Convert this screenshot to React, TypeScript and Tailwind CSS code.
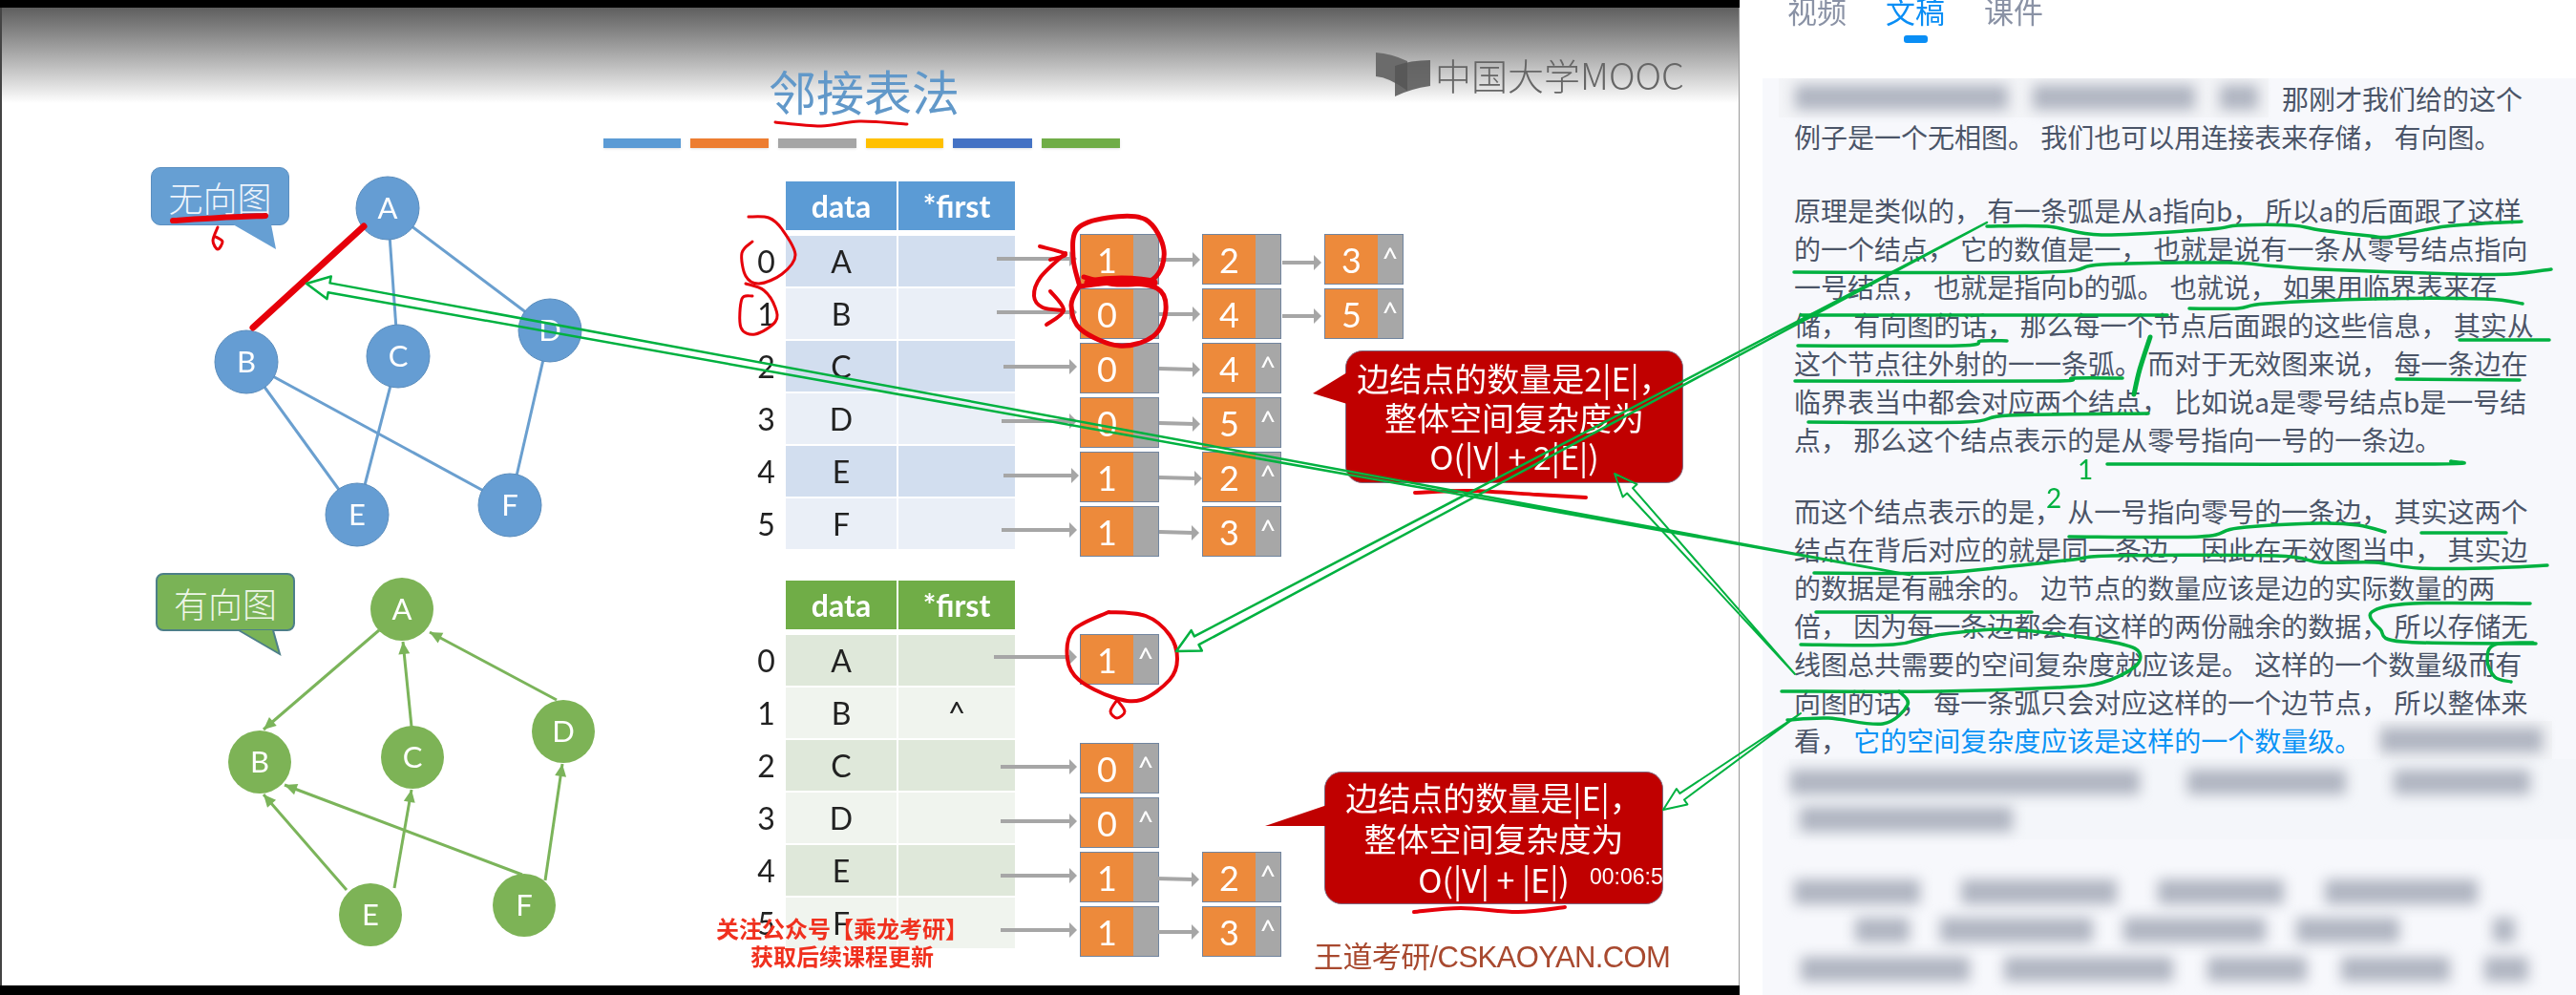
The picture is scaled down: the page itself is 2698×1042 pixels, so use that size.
import React from 'react';

type Pt = [number, number];

const CJK = { fontFamily: '"Noto Sans CJK SC", "Noto Sans", sans-serif' };
const SLIDE_FONT = { fontFamily: 'Lato, "Noto Sans CJK SC", sans-serif' };

// catmull-rom through the points, so the ink strokes look hand drawn
const smooth = (p: Pt[]) => {
  let d = `M${p[0][0]} ${p[0][1]}`;
  for (let i = 0; i < p.length - 1; i++) {
    const a = p[Math.max(i - 1, 0)];
    const b = p[i];
    const c = p[i + 1];
    const e = p[Math.min(i + 2, p.length - 1)];
    d += ` C${b[0] + (c[0] - a[0]) / 6} ${b[1] + (c[1] - a[1]) / 6} ${c[0] - (e[0] - b[0]) / 6} ${c[1] - (e[1] - b[1]) / 6} ${c[0]} ${c[1]}`;
  }
  return d;
};

// hollow arrow whose shaft narrows down to a point at the tail
const hollowArrow = (tip: Pt, tail: Pt, head = 22, wing = 11, neck = 4) => {
  const dx = tail[0] - tip[0];
  const dy = tail[1] - tip[1];
  const len = Math.hypot(dx, dy);
  const ux = dx / len;
  const uy = dy / len;
  const bx = tip[0] + ux * head;
  const by = tip[1] + uy * head;
  const side = (w: number): string => `${bx - uy * w} ${by + ux * w}`;
  return `M${tip[0]} ${tip[1]} L${side(wing)} L${side(neck)} L${tail[0]} ${tail[1]} L${side(-neck)} L${side(-wing)} Z`;
};

const blueEdges: [Pt, Pt][] = [
  [[406, 218], [417, 373]],
  [[406, 218], [576, 346]],
  [[417, 373], [374, 539]],
  [[258, 379], [374, 539]],
  [[258, 379], [534, 529]],
  [[576, 346], [534, 529]],
];

const blueNodes: [string, number, number][] = [
  ['A', 406, 218],
  ['B', 258, 379],
  ['C', 417, 373],
  ['D', 576, 346],
  ['E', 374, 539],
  ['F', 534, 529],
];

const greenNodes: [string, number, number][] = [
  ['A', 421, 638],
  ['B', 272, 798],
  ['C', 432, 793],
  ['D', 590, 766],
  ['E', 388, 958],
  ['F', 549, 948],
];

// line ends stop at the circle edge, arrow head on the second point
const greenEdges: [Pt, Pt][] = [
  [[397, 660], [276, 764]],
  [[431, 761], [422, 672]],
  [[583, 733], [450, 662]],
  [[413, 930], [431, 827]],
  [[363, 932], [276, 832]],
  [[547, 916], [298, 822]],
  [[571, 922], [589, 800]],
];

const grayArrows: [number, number, number, number][] = [
  [1044, 271, 1128, 271], [1044, 327, 1128, 327], [1051, 384, 1128, 384],
  [1049, 441, 1128, 441], [1051, 498, 1130, 498], [1049, 555, 1128, 555],
  [1214, 272, 1257, 272], [1343, 275, 1384, 275], [1214, 329, 1257, 329], [1343, 331, 1384, 331],
  [1214, 386, 1257, 387], [1214, 443, 1257, 444], [1214, 500, 1259, 501], [1214, 557, 1256, 558],
  [1041, 688, 1128, 688], [1048, 803, 1128, 803], [1048, 860, 1128, 860],
  [1048, 917, 1128, 917], [1048, 974, 1128, 974], [1211, 920, 1256, 921], [1211, 976, 1256, 976],
];

const tableRows = ['A', 'B', 'C', 'D', 'E', 'F'];

const chainsTop: [string, boolean][][] = [
  [['1', false], ['2', false], ['3', true]],
  [['0', false], ['4', false], ['5', true]],
  [['0', false], ['4', true]],
  [['0', false], ['5', true]],
  [['1', false], ['2', true]],
  [['1', false], ['3', true]],
];

const chainsBottom: [string, boolean][][] = [
  [['1', true]],
  [],
  [['0', true]],
  [['0', true]],
  [['1', false], ['2', true]],
  [['1', false], ['3', true]],
];

const ListNode = ({ value, tail }: { value: string; tail: boolean }) => (
  <div className="flex w-[83px] h-[53px] border border-[#71859f] text-white">
    <div className="w-[55px] bg-[#ed8a3b] flex items-center justify-center text-[36px]">{value}</div>
    <div className="flex-1 bg-[#a7a7a7] flex justify-center text-[30px] leading-[36px] pt-[6px]">{tail ? '^' : ''}</div>
  </div>
);

const Chains = ({ rows, className }: { rows: [string, boolean][][]; className: string }) => (
  <div className={className}>
    {rows.map((row, i) => (
      <div key={i} className="flex gap-[45px] h-[53px]">
        {row.map(([v, t], j) => <ListNode key={j} value={v} tail={t} />)}
      </div>
    ))}
  </div>
);

const AdjTable = ({ className, head, dark, light, nullRow }: { className: string; head: string; dark: string; light: string; nullRow?: number }) => (
  <div className={className}>
    <div className="flex gap-[2px] h-[51px] pl-[39px] mb-[6px] text-white font-bold text-[32px]">
      <div className={`w-[116px] flex items-center justify-center ${head}`}>data</div>
      <div className={`w-[122px] flex items-center justify-center ${head}`}>*first</div>
    </div>
    <div className="flex flex-col gap-[2px]">
      {tableRows.map((r, i) => (
        <div key={r} className="flex gap-[2px] h-[53px] text-[32px] text-[#222]">
          <div className="w-[37px] flex items-center justify-center">{i}</div>
          <div className={`w-[116px] flex items-center justify-center ${i % 2 ? light : dark}`}>{r}</div>
          <div className={`w-[122px] flex items-center justify-center ${i % 2 ? light : dark}`}>{nullRow === i ? '^' : ''}</div>
        </div>
      ))}
    </div>
  </div>
);

const para1 = [
  '例子是一个无相图。 我们也可以用连接表来存储， 有向图。',
];
const para2 = [
  '原理是类似的， 有一条弧是从a指向b， 所以a的后面跟了这样',
  '的一个结点， 它的数值是一， 也就是说有一条从零号结点指向',
  '一号结点， 也就是指向b的弧。 也就说， 如果用临界表来存',
  '储， 有向图的话， 那么每一个节点后面跟的这些信息， 其实从',
  '这个节点往外射的一一条弧。 而对于无效图来说， 每一条边在',
  '临界表当中都会对应两个结点， 比如说a是零号结点b是一号结',
  '点， 那么这个结点表示的是从零号指向一号的一条边。',
];
const para3 = [
  '而这个结点表示的是， 从一号指向零号的一条边， 其实这两个',
  '结点在背后对应的就是同一条边， 因此在无效图当中， 其实边',
  '的数据是有融余的。 边节点的数量应该是边的实际数量的两',
  '倍， 因为每一条边都会有这样的两份融余的数据， 所以存储无',
  '线图总共需要的空间复杂度就应该是。 这样的一个数量级而有',
  '向图的话， 每一条弧只会对应这样的一个边节点， 所以整体来',
];

const Bar = ({ className }: { className: string }) => (
  <div className={`h-[26px] bg-[#b0b5c1] blur-[7px] ${className}`} />
);

const greenInk: Pt[][] = [
  [[2081, 237], [2144, 237], [2201, 246], [2315, 240], [2344, 236], [2401, 236], [2430, 241], [2482, 247], [2504, 248], [2562, 237], [2641, 232]],
  [[1879, 285], [2144, 285], [2201, 277], [2333, 275], [2373, 278], [2430, 282], [2573, 287], [2630, 287], [2672, 282]],
  [[2293, 323], [2344, 323], [2373, 318], [2487, 313], [2602, 313], [2642, 318]],
  [[1886, 330], [2212, 330], [2270, 330]],
  [[1883, 362], [2052, 362], [2075, 357], [2102, 357]],
  [[2576, 356], [2670, 356]],
  [[1880, 399], [2144, 399], [2172, 396], [2223, 396]],
  [[2510, 397], [2639, 398]],
  [[1894, 442], [2058, 442], [2104, 435], [2250, 433]],
  [[2207, 486], [2550, 486], [2567, 483]],
  [[2167, 562], [2304, 562], [2344, 553], [2430, 548], [2470, 550], [2498, 557]],
  [[2536, 558], [2625, 558]],
  [[1900, 600], [2029, 600], [2098, 594], [2172, 586], [2212, 582], [2384, 582], [2430, 589], [2487, 589], [2533, 595], [2602, 595], [2668, 592]],
  [[1902, 641], [2128, 641]],
  [[1886, 675], [1983, 675], [2029, 665], [2098, 659], [2172, 666], [2224, 675], [2241, 684], [2235, 699], [2201, 715], [2155, 720], [2029, 724], [1866, 724]],
  [[2650, 632], [2527, 632], [2484, 641], [2493, 659], [2516, 672], [2656, 674]],
  [[2630, 714], [2613, 709], [2605, 691], [2613, 675], [2653, 673]],
  [[1872, 754], [1915, 752], [1972, 758], [1998, 738], [1989, 724]],
];

const App: React.FC = () => {
  return (
    <div className="relative flex w-[2698px] h-[1042px] overflow-hidden bg-white" style={CJK}>
      {/* video column */}
      <div className="flex flex-col w-[1822px] h-full bg-white">
        <div className="h-[8px] bg-black" />
        <div className="relative flex-1 border-l-2 border-r border-l-[#444] border-r-[#999] blur-[0.6px]" style={SLIDE_FONT}>
          <div className="h-[100px] bg-gradient-to-b from-[#5f5f5f] to-white" />

          <h1 className="absolute left-[803px] top-[56px] text-[50px] leading-[60px] font-normal text-[#6198c9] whitespace-nowrap" style={CJK}>邻接表法</h1>

          {/* mooc logo */}
          <div className="absolute left-[1439px] top-[47px] flex items-center gap-[4px] text-[#666]">
            <svg width="58" height="46" viewBox="0 0 58 46">
              <path d="M0 0 Q16 1 33 9 L33 40 Q14 26 0 25 Z" fill="#6b6b6b" />
              <path d="M20 14 Q36 8 57 8 L57 35 Q36 38 20 46 Z" fill="#555" fillOpacity="0.85" />
            </svg>
            <span className="text-[38px] leading-[46px] font-light whitespace-nowrap" style={CJK}>中国大学MOOC</span>
          </div>

          {/* colour strip under the title */}
          <div className="absolute left-[630px] top-[137px] flex gap-[10px]">
            <div className="w-[81px] h-[10px] bg-[#5b9bd5] shadow-sm" />
            <div className="w-[82px] h-[10px] bg-[#ed7d31] shadow-sm" />
            <div className="w-[82px] h-[10px] bg-[#a5a5a5] shadow-sm" />
            <div className="w-[81px] h-[10px] bg-[#ffc000] shadow-sm" />
            <div className="w-[83px] h-[10px] bg-[#4472c4] shadow-sm" />
            <div className="w-[82px] h-[10px] bg-[#70ad47] shadow-sm" />
          </div>

          <AdjTable className="absolute left-[782px] top-[182px]" head="bg-[#5b9bd5]" dark="bg-[#d2deef]" light="bg-[#eaeff7]" />
          <AdjTable className="absolute left-[782px] top-[600px]" head="bg-[#70ad47]" dark="bg-[#dfe8da]" light="bg-[#f0f4ee]" nullRow={1} />

          <Chains rows={chainsTop} className="absolute left-[1129px] top-[237px] flex flex-col gap-[4px]" />
          <Chains rows={chainsBottom} className="absolute left-[1129px] top-[656px] flex flex-col gap-[4px]" />

          {/* speech bubbles */}
          <div className="absolute left-[156px] top-[167px] w-[145px] h-[61px] rounded-[10px] bg-[#669fd3] border border-[#5b8fc0] flex items-center justify-center text-[36px] font-light text-[#eef4fb]" style={CJK}>无向图</div>
          <div className="absolute left-[161px] top-[592px] w-[146px] h-[61px] rounded-[8px] bg-[#7ab356] border-2 border-[#4d7f88] flex items-center justify-center text-[36px] font-light text-[#eef6e8]" style={CJK}>有向图</div>
          <div className="absolute left-[1407px] top-[359px] w-[354px] h-[139px] rounded-[18px] bg-[#c00000] border border-[#7f6a80] flex flex-col items-center justify-center text-[34px] leading-[41px] text-white whitespace-nowrap" style={CJK}>
            <div>边结点的数量是2|E|，</div>
            <div>整体空间复杂度为</div>
            <div>O(|V| + 2|E|)</div>
          </div>
          <div className="absolute left-[1385px] top-[800px] w-[355px] h-[139px] rounded-[18px] bg-[#c00000] border border-[#7f6a80] flex flex-col items-center justify-center text-[34px] leading-[43px] text-white whitespace-nowrap" style={CJK}>
            <div>边结点的数量是|E|，</div>
            <div>整体空间复杂度为</div>
            <div>O(|V| + |E|)</div>
          </div>

          {/* watermarks */}
          <div className="absolute left-[756px] top-[949px] w-[248px] flex flex-col items-center text-[24px] leading-[29px] font-bold text-[#f0301e] whitespace-nowrap" style={CJK}>
            <div>关注公众号【乘龙考研】</div>
            <div>获取后续课程更新</div>
          </div>
          <div className="absolute left-[1374px] top-[974px] text-[31px] leading-[42px] text-[#a8492f] whitespace-nowrap tracking-[-0.6px]" style={{ fontFamily: '"Liberation Sans", "Noto Sans CJK SC", sans-serif' }}>王道考研/CSKAOYAN.COM</div>

          {/* graphs, list arrows and the red pen, same origin as the slide */}
          <svg className="absolute -left-[2px] -top-[8px] pointer-events-none" width="1822" height="1042" fill="none">
            {blueEdges.map(([a, b], i) => (
              <line key={i} x1={a[0]} y1={a[1]} x2={b[0]} y2={b[1]} stroke="#6a9fcf" strokeWidth="3" />
            ))}
            {blueNodes.map(([l, x, y]) => (
              <g key={l}>
                <circle cx={x} cy={y} r="33" fill="#659dd3" stroke="#5a8cbb" strokeWidth="1" />
                <text x={x} y={y + 11} textAnchor="middle" fontSize="31" fill="#fff" fontFamily="Lato">{l}</text>
              </g>
            ))}
            {greenEdges.map(([a, b], i) => {
              const an = Math.atan2(b[1] - a[1], b[0] - a[0]);
              const w = (s: number) => `${b[0] - 13 * Math.cos(an) + s * 6 * Math.sin(an)},${b[1] - 13 * Math.sin(an) - s * 6 * Math.cos(an)}`;
              return (
                <g key={i}>
                  <line x1={a[0]} y1={a[1]} x2={b[0]} y2={b[1]} stroke="#7bb45a" strokeWidth="3" />
                  <polygon points={`${b[0]},${b[1]} ${w(1)} ${w(-1)}`} fill="#7bb45a" />
                </g>
              );
            })}
            {greenNodes.map(([l, x, y]) => (
              <g key={l}>
                <circle cx={x} cy={y} r="33" fill="#7db356" />
                <text x={x} y={y + 11} textAnchor="middle" fontSize="31" fill="#fff" fontFamily="Lato">{l}</text>
              </g>
            ))}

            {/* bubble tails */}
            <path d="M244 235 L289 261 L284 235 Z" fill="#669fd3" />
            <path d="M250 660 L293 685 L286 660" fill="#7ab356" stroke="#4d7f88" strokeWidth="2" />
            <path d="M1411 390 L1375 412 L1411 423 Z" fill="#c00000" />
            <path d="M1390 843 L1325 865 L1390 865 Z" fill="#c00000" />

            {grayArrows.map(([x1, y1, x2, y2], i) => (
              <g key={i}>
                <line x1={x1} y1={y1} x2={x2 - 6} y2={y2} stroke="#a6a6a6" strokeWidth="4" />
                <path d={`M${x2 - 8} ${y2 - 8} L${x2} ${y2} L${x2 - 8} ${y2 + 8} Z`} fill="#a6a6a6" />
              </g>
            ))}

            <g stroke="#e6000a" strokeLinecap="round" strokeLinejoin="round" strokeWidth="3">
              <line x1="381" y1="237" x2="265" y2="343" strokeWidth="7" />
              <path d={smooth([[812, 128], [860, 132], [900, 127], [950, 130]])} />
              <path d={smooth([[181, 231], [230, 228], [278, 226]])} strokeWidth="6" />
              <path d={smooth([[228, 238], [223, 252], [228, 261], [233, 253], [226, 248]])} />
              <path d={smooth([[784, 227], [805, 228], [819, 240], [833, 267], [819, 287], [795, 297], [781, 289], [777, 265], [788, 253]])} />
              <path d={smooth([[781, 297], [800, 304], [812, 322], [812, 337], [791, 350], [776, 343], [777, 313], [788, 310]])} />
              <path d={smooth([[1130, 297], [1124, 270], [1128, 240], [1160, 228], [1200, 230], [1219, 262], [1208, 292], [1170, 298], [1135, 290]])} strokeWidth="5" />
              <path d={smooth([[1130, 300], [1170, 296], [1212, 302], [1221, 325], [1208, 352], [1172, 362], [1132, 345], [1122, 320], [1130, 300]])} strokeWidth="5" />
              <path d="M1140 296 Q1175 290 1208 296" strokeWidth="9" />
              <path d={smooth([[1116, 265], [1090, 290], [1083, 310], [1092, 322], [1114, 325]])} strokeWidth="4" />
              <path d={smooth([[1089, 258], [1116, 266], [1100, 272]])} strokeWidth="4" />
              <path d={smooth([[1100, 305], [1114, 325], [1096, 340]])} strokeWidth="4" />
              <path d={smooth([[1161, 641], [1200, 645], [1225, 665], [1233, 690], [1225, 712], [1195, 733], [1165, 730], [1130, 712], [1118, 690], [1124, 660], [1161, 641]])} strokeWidth="4" />
              <path d={smooth([[1170, 733], [1163, 745], [1170, 752], [1178, 745], [1170, 733]])} />
              <path d={smooth([[1482, 516], [1540, 514], [1610, 518], [1661, 521]])} strokeWidth="4" />
              <path d={smooth([[1481, 955], [1530, 951], [1590, 955], [1639, 950]])} strokeWidth="4" />
            </g>
          </svg>
        </div>
        <div className="h-[10px] bg-black" />
      </div>

      {/* transcript column */}
      <div className="flex flex-col flex-1 min-w-0 bg-white">
        <div className="relative h-[82px] pl-[50px] shrink-0">
          <div className="flex gap-[41px] -mt-[10px] text-[31px] leading-[42px] text-[#8a92a5]">
            <span>视频</span>
            <span className="text-[#0a8ef5]">文稿</span>
            <span>课件</span>
          </div>
          <div className="absolute left-[172px] top-[37px] w-[25px] h-[8px] rounded-[3px] bg-[#0a8ef5]" />
        </div>
        <div className="ml-[24px] flex-1 bg-[#f7f8fc] pl-[33px] pt-[1px] text-[28px] leading-[40px] text-[#4b5568] overflow-hidden whitespace-nowrap">
          <div className="flex h-[40px]">
            <div className="flex items-center gap-[26px] -ml-[16px] w-[513px] h-[42px] -mt-[2px] pl-[17px] bg-[#f3f4f7]">
              <Bar className="w-[223px]" />
              <Bar className="w-[170px]" />
              <Bar className="w-[40px]" />
            </div>
            <span className="ml-[14px]">那刚才我们给的这个</span>
          </div>
          {para1.map(l => <div key={l}>{l}</div>)}
          <div className="mt-[37px]">
            {para2.map(l => <div key={l}>{l}</div>)}
          </div>
          <div className="mt-[35px]">
            {para3.map(l => <div key={l}>{l}</div>)}
            <div className="flex h-[40px]">
              <span>看， <span className="text-[#0a93f5]">它的空间复杂度应该是这样的一个数量级。</span></span>
              <div className="ml-[20px] w-[180px] h-[40px] flex items-center bg-[#f3f4f7]">
                <Bar className="w-[170px]" />
              </div>
            </div>
          </div>
          <div className="-ml-[5px] pl-[1px] bg-[#f4f6fa] h-[84px] pt-[6px]">
            <div className="flex items-center gap-[50px] h-[36px]">
              <Bar className="w-[366px]" />
              <Bar className="w-[166px]" />
              <Bar className="w-[143px]" />
            </div>
            <div className="flex items-center h-[42px] pl-[10px]">
              <Bar className="w-[223px]" />
            </div>
          </div>
          <div className="mt-[35px] flex items-center gap-[43px] h-[40px]">
            <Bar className="w-[132px]" />
            <Bar className="w-[163px]" />
            <Bar className="w-[132px]" />
            <Bar className="w-[160px]" />
          </div>
          <div className="flex items-center gap-[32px] h-[40px] pl-[64px]">
            <Bar className="w-[57px]" />
            <Bar className="w-[160px]" />
            <Bar className="w-[149px]" />
            <Bar className="w-[108px]" />
            <Bar className="ml-[66px] w-[23px]" />
          </div>
          <div className="flex items-center gap-[36px] h-[42px] pl-[7px]">
            <Bar className="w-[177px]" />
            <Bar className="w-[177px]" />
            <Bar className="w-[104px]" />
            <Bar className="w-[114px]" />
            <Bar className="w-[46px]" />
          </div>
        </div>
      </div>

      {/* player timestamp, sits over the slide and is cut at the bubble edge */}
      <div className="absolute left-[1665px] top-[903px] w-[77px] overflow-hidden text-[23px] leading-[30px] text-white whitespace-nowrap" style={{ fontFamily: '"Liberation Sans", sans-serif' }}>00:06:59</div>

      {/* green pen drawn over both columns */}
      <svg className="absolute left-0 top-0 pointer-events-none" width="2698" height="1042" fill="none">
        <g stroke="#00b140" strokeLinejoin="round" strokeLinecap="round">
          <path d={hollowArrow([321, 297], [2000, 602], 24, 12, 5)} strokeWidth="2.5" />
          <path d={hollowArrow([1232, 682], [2081, 233], 24, 12, 5)} strokeWidth="2.5" />
          <path d={hollowArrow([1691, 496], [1880, 706], 24, 10, 4)} strokeWidth="2" />
          <path d={hollowArrow([1742, 848], [1886, 747], 24, 10, 4)} strokeWidth="2" />
          {greenInk.map((p, i) => <path key={i} d={smooth(p)} strokeWidth="3.5" />)}
          <path d={smooth([[2252, 353], [2241, 387], [2235, 413]])} strokeWidth="5" />
        </g>
        <text x="2176" y="502" fontSize="28" fill="#00b140" fontFamily="Lato">1</text>
        <text x="2143" y="532" fontSize="28" fill="#00b140" fontFamily="Lato">2</text>
      </svg>
    </div>
  );
};

export default App;
